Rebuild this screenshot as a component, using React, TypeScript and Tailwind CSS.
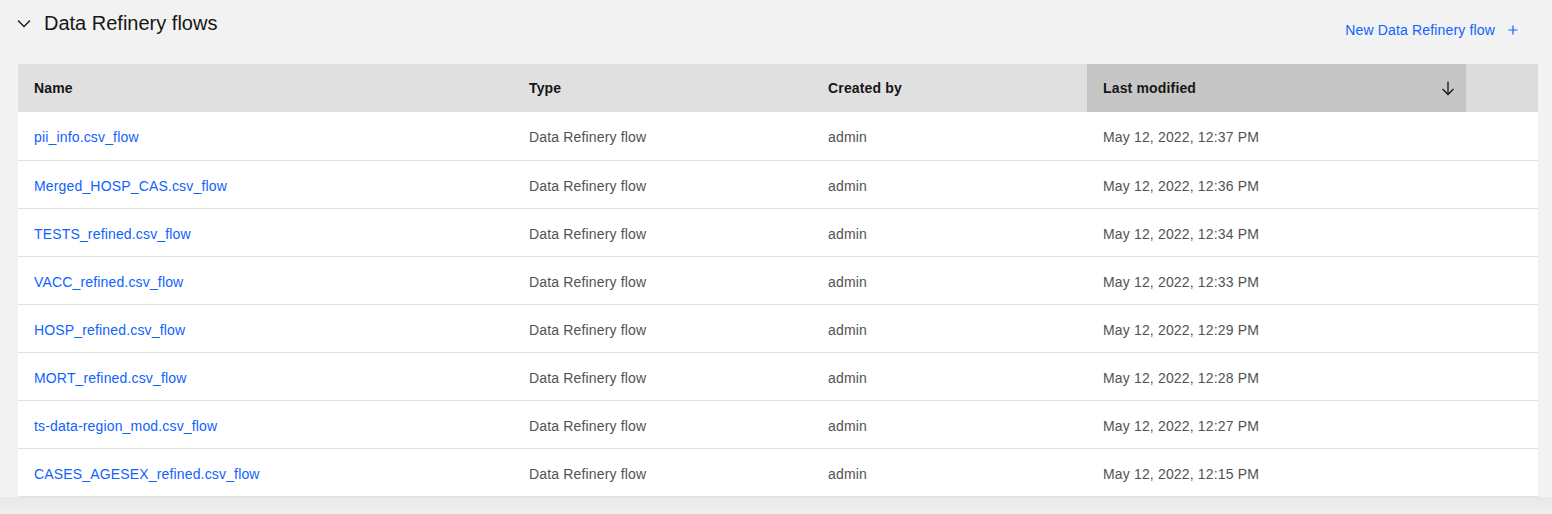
import React from "react";

const rows = [
  { name: "pii_info.csv_flow", date: "May 12, 2022, 12:37 PM" },
  { name: "Merged_HOSP_CAS.csv_flow", date: "May 12, 2022, 12:36 PM" },
  { name: "TESTS_refined.csv_flow", date: "May 12, 2022, 12:34 PM" },
  { name: "VACC_refined.csv_flow", date: "May 12, 2022, 12:33 PM" },
  { name: "HOSP_refined.csv_flow", date: "May 12, 2022, 12:29 PM" },
  { name: "MORT_refined.csv_flow", date: "May 12, 2022, 12:28 PM" },
  { name: "ts-data-region_mod.csv_flow", date: "May 12, 2022, 12:27 PM" },
  { name: "CASES_AGESEX_refined.csv_flow", date: "May 12, 2022, 12:15 PM" },
];

const cols = "grid grid-cols-[495px_299px_275px_379px_72px]";

export default function App() {
  return (
    <div
      className="w-[1552px] h-[514px] bg-[#f2f2f2] text-[#161616] overflow-hidden"
      style={{ fontFamily: '"Liberation Sans", Arial, sans-serif' }}
    >
      <div className="flex items-start justify-between h-[64px]">
        <div className="flex items-center gap-[12px] pl-[16px] pt-[11px]">
          <svg width="16" height="16" viewBox="0 0 16 16" fill="none">
            <path d="M2 5.5l6 6 6-6" stroke="#161616" strokeWidth="1.3" />
          </svg>
          <h2 className="text-[20px] leading-[24px]">Data Refinery flows</h2>
        </div>
        <button className="flex items-center gap-[13px] pr-[34px] pt-[21px] text-[14px] leading-[18px] tracking-[0.16px] text-[#0f62fe]">
          New Data Refinery flow
          <svg width="10" height="10" viewBox="0 0 10 10" fill="none">
            <path d="M5 0.5v9M0.5 5h9" stroke="#0f62fe" strokeWidth="1.2" />
          </svg>
        </button>
      </div>

      <div className="mx-[18px] w-[1520px] bg-white border-b border-[#e0e0e0]">
        <div className={`${cols} h-[48px] bg-[#e0e0e0] text-[14px] font-semibold tracking-[0.16px]`}>
          <div className="flex items-center px-[16px]">Name</div>
          <div className="flex items-center px-[16px]">Type</div>
          <div className="flex items-center px-[16px]">Created by</div>
          <div className="flex items-center justify-between pl-[16px] pr-[10px] bg-[#c6c6c6]">
            Last modified
            <svg width="16" height="16" viewBox="0 0 16 16" fill="none">
              <path d="M8 1.5v13M2.5 9l5.5 5.5L13.5 9" stroke="#161616" strokeWidth="1.3" />
            </svg>
          </div>
          <div className="bg-[#dcdcdc]" />
        </div>
        {rows.map((r, i) => (
          <div
            key={r.name}
            className={`${cols} h-[48px] text-[14px] tracking-[0.16px] text-[#525252] ${i > 0 ? "border-t border-[#e0e0e0]" : ""}`}
          >
            <div className="flex items-center px-[16px] pt-[3px] text-[#0f62fe]">{r.name}</div>
            <div className="flex items-center px-[16px] pt-[3px]">Data Refinery flow</div>
            <div className="flex items-center px-[16px] pt-[3px]">admin</div>
            <div className="flex items-center px-[16px] pt-[3px]">{r.date}</div>
            <div />
          </div>
        ))}
      </div>
      <div className="h-[18px] bg-gradient-to-b from-[#e8e8e8] to-[#efefef]" />
    </div>
  );
}
